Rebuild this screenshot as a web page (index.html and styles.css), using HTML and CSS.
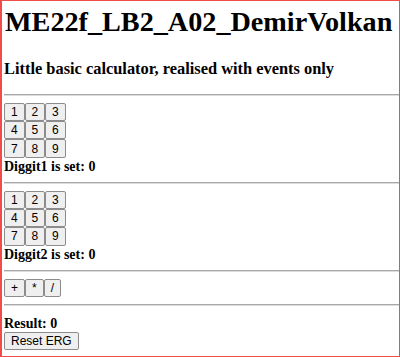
FILE: index.html
```html
<!DOCTYPE html>
<html lang="de">
<head>
<meta charset="utf-8">
<title>ME22f_LB2_A02_DemirVolkan</title>
<link rel="stylesheet" href="styles.css">
</head>
<body>
<h1 class="title">ME22f_LB2_A02_DemirVolkan</h1>
<h3 class="subtitle">Little basic calculator, realised with events only</h3>
<hr class="rule">
<div class="pad">
<button class="btn key">1</button><button class="btn key">2</button><button class="btn key">3</button>
<button class="btn key">4</button><button class="btn key">5</button><button class="btn key">6</button>
<button class="btn key">7</button><button class="btn key">8</button><button class="btn key">9</button>
</div>
<p class="status">Diggit1 is set: 0</p>
<hr class="rule">
<div class="pad">
<button class="btn key">1</button><button class="btn key">2</button><button class="btn key">3</button>
<button class="btn key">4</button><button class="btn key">5</button><button class="btn key">6</button>
<button class="btn key">7</button><button class="btn key">8</button><button class="btn key">9</button>
</div>
<p class="status">Diggit2 is set: 0</p>
<hr class="rule">
<div class="ops">
<button class="btn op">+</button><button class="btn op">*</button><button class="btn op">/</button>
</div>
<hr class="rule">
<p class="status result">Result: 0</p>
<button class="btn reset">Reset ERG</button>
</body>
</html>
```
FILE: styles.css
```css
html {
  height: 100%;
}
body {
  box-sizing: border-box;
  height: 100%;
  margin: 0;
  padding: 0 0 0 2px;
  border-style: solid;
  border-color: #f24b4b;
  border-width: 1px 1px 1px 2px;
  font-family: "Liberation Serif", "Times New Roman", serif;
  font-size: 14px;
  color: #000;
  background: #fff;
}
.title {
  font-size: 28.2px;
  font-weight: bold;
  margin: 4.5px 0 0 1px;
  line-height: 32px;
}
.subtitle {
  font-size: 16.4px;
  font-weight: bold;
  margin: 21.5px 0 0 0;
  line-height: 19px;
}
.rule {
  margin: 15.8px 0 7px 0;
  height: 0;
  border: 0;
  border-top: 1px solid #a8a8a8;
  border-bottom: 1px solid #dcdcdc;
}
.status + .rule,
.ops + .rule {
  margin-top: 7px;
}
.pad {
  display: grid;
  grid-template-columns: repeat(3, 20.5px);
  grid-auto-rows: 18.3px;
  justify-content: start;
}
.ops {
  display: flex;
  height: 18.3px;
}
.btn {
  box-sizing: border-box;
  font-family: "Liberation Sans", Arial, sans-serif;
  font-size: 12px;
  color: #000;
  background: #efefef;
  border: 1px solid #8c8c8c;
  border-radius: 2px;
  padding: 0 6px;
  margin: 0;
  height: 18.3px;
  line-height: 16px;
}
.key {
  width: 20.5px;
  padding: 0;
}
.status {
  margin: 1px 0 0 0;
  font-weight: bold;
  line-height: 16px;
}
.result {
  margin-top: 10px;
}
.reset {
  display: block;
  margin-top: 0;
}
```
